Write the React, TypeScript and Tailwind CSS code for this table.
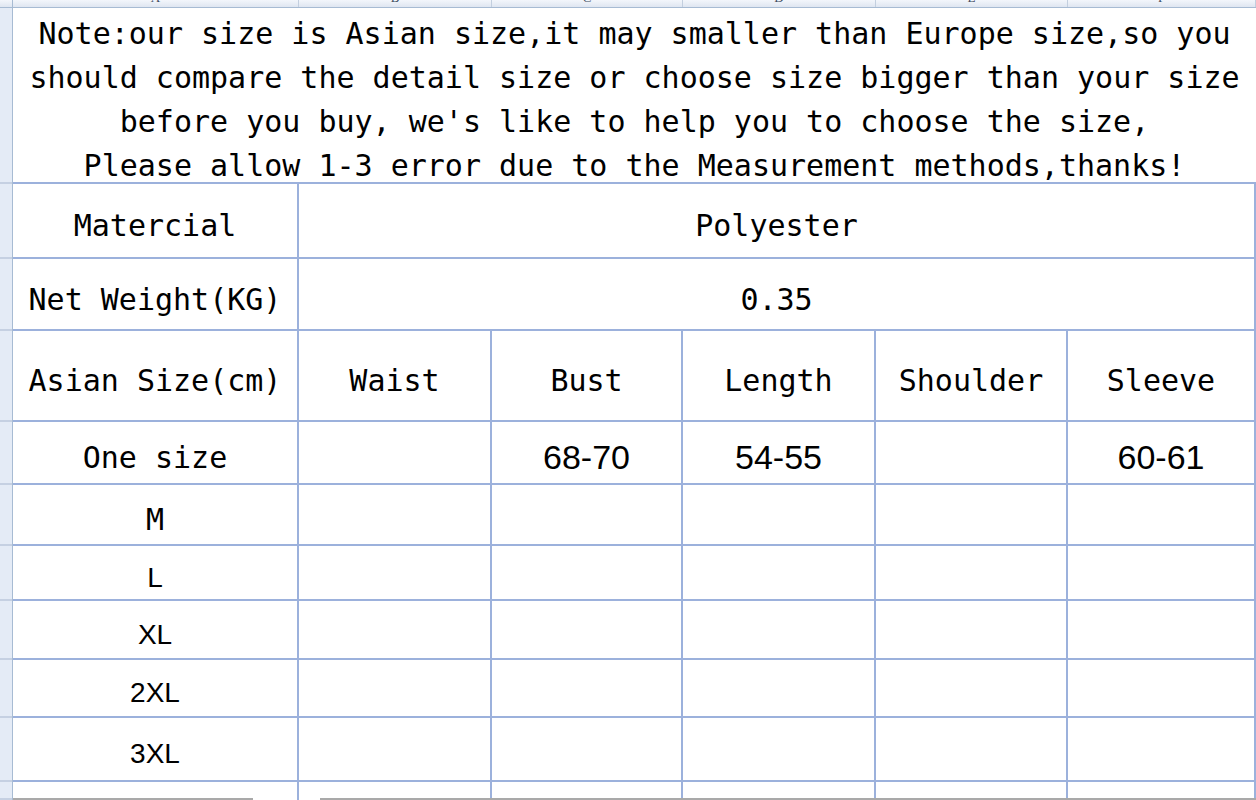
const mono = "font-['DejaVu_Sans_Mono','Liberation_Mono',monospace]"
const sans = "font-['Liberation_Sans',Arial,sans-serif]"

const colLetters = ["A", "B", "C", "D", "E", "F"]
const colWidths = ["w-[286px]", "w-[193px]", "w-[191px]", "w-[193px]", "w-[192px]", "w-[188px]"]

const rowHeights = [
  "h-[176px]",
  "h-[75px]",
  "h-[72px]",
  "h-[91px]",
  "h-[63px]",
  "h-[61px]",
  "h-[55px]",
  "h-[59px]",
  "h-[58px]",
  "h-[64px]",
  "h-[18px]",
]

const sizes = [
  { label: "One size", font: mono, values: ["", "68-70", "54-55", "", "60-61"] },
  { label: "M", font: mono, values: ["", "", "", "", ""] },
  { label: "L", font: sans, values: ["", "", "", "", ""] },
  { label: "XL", font: sans, values: ["", "", "", "", ""] },
  { label: "2XL", font: sans, values: ["", "", "", "", ""] },
  { label: "3XL", font: sans, values: ["", "", "", "", ""] },
]

const line = "border-[#9cb1dc]"

function Cell({ w, children, className = "" }: { w: string; children?: any; className?: string }) {
  return (
    <div
      className={`${w} h-full shrink-0 border-r-2 border-b-2 ${line} flex items-center justify-center pt-[10px] text-black ${className}`}
    >
      {children}
    </div>
  )
}

export default function App() {
  return (
    <div className="relative w-[1256px] h-[800px] overflow-hidden bg-white">

      {/* column header strip */}
      <div className="flex h-[8px] bg-gradient-to-b from-[#f3f6fb] to-[#dfe6f1] border-b border-[#a7bbd3]">
        <div className="w-[13px] shrink-0 border-r border-[#a7bbd3]" />
        {colLetters.map((c, i) => (
          <div
            key={c}
            className={`${colWidths[i]} shrink-0 border-r border-[#c3cfdf] flex justify-center overflow-hidden`}
          >
            <span className="-mt-[10px] text-[13px] leading-[16px] text-[#3b4a5e] font-['Liberation_Serif',serif]">
              {c}
            </span>
          </div>
        ))}
      </div>

      <div className="flex">

        {/* row header strip */}
        <div className="w-[13px] shrink-0 flex flex-col bg-[#e4ebf6] border-r border-[#a7bbd3]">
          {rowHeights.map((h, i) => (
            <div key={i} className={`${h} border-b-2 border-[#c5d0e2]`} />
          ))}
        </div>

        <div className="flex flex-col">

          {/* note */}
          <div className={`${rowHeights[0]} flex`}>
            <div
              className={`w-[1243px] h-full border-b-2 ${line} flex flex-col items-center justify-center pt-[10px] ${mono} text-[30px] leading-[44px] text-black whitespace-pre`}
            >
              <div>Note:our size is Asian size,it may smaller than Europe size,so you</div>
              <div>should compare the detail size or choose size bigger than your size</div>
              <div>before you buy, we's like to help you to choose the size,</div>
              <div>Please allow 1-3 error due to the Measurement methods,thanks!</div>
            </div>
          </div>

          {/* material */}
          <div className={`${rowHeights[1]} flex ${mono} text-[30px] whitespace-pre`}>
            <Cell w={colWidths[0]}>Matercial</Cell>
            <Cell w="w-[957px]" className="border-r-0">Polyester</Cell>
          </div>

          {/* weight */}
          <div className={`${rowHeights[2]} flex ${mono} text-[30px] whitespace-pre`}>
            <Cell w={colWidths[0]}>Net Weight(KG)</Cell>
            <Cell w="w-[957px]" className="border-r-0">0.35</Cell>
          </div>

          {/* headers */}
          <div className={`${rowHeights[3]} flex ${mono} text-[30px] whitespace-pre`}>
            <Cell w={colWidths[0]}>Asian Size(cm)</Cell>
            <Cell w={colWidths[1]}>Waist</Cell>
            <Cell w={colWidths[2]}>Bust</Cell>
            <Cell w={colWidths[3]}>Length</Cell>
            <Cell w={colWidths[4]}>Shoulder</Cell>
            <Cell w={colWidths[5]}>Sleeve</Cell>
          </div>

          {sizes.map((s, r) => (
            <div key={s.label} className={`${rowHeights[4 + r]} flex whitespace-pre`}>
              <Cell
                w={colWidths[0]}
                className={`${s.font} ${s.font === mono ? "text-[30px]" : "text-[28px]"}`}
              >
                {s.label}
              </Cell>
              {s.values.map((v, i) => (
                <Cell key={i} w={colWidths[i + 1]} className={`${sans} text-[34px]`}>
                  {v}
                </Cell>
              ))}
            </div>
          ))}

          {/* last partial row */}
          <div className={`${rowHeights[10]} flex`}>
            {colWidths.map((w, i) => (
              <div key={i} className={`${w} h-full shrink-0 border-r-2 ${line}`} />
            ))}
          </div>

        </div>
      </div>

      {/* sheet bar edge at the bottom */}
      <div className="absolute left-[13px] bottom-0 w-[240px] h-[2px] bg-[#a9a9a9]" />
      <div className="absolute left-[320px] right-0 bottom-0 h-[2px] bg-[#a9a9a9]" />
    </div>
  )
}
